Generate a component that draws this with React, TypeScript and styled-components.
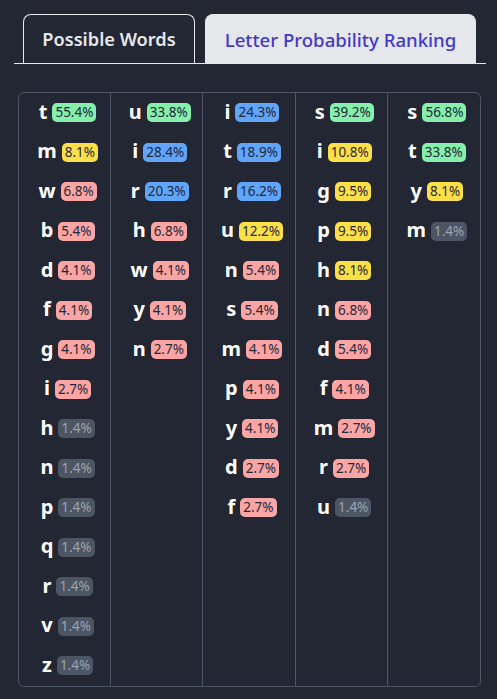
import styled, { createGlobalStyle } from "styled-components"

const Global = createGlobalStyle`
    body {
        margin: 0;
        background: #222733;
        font-family: "Noto Sans", "Open Sans", sans-serif;
    }
`

const Page = styled.div`
    padding: 14px 11px 0 14px;
`
const TabList = styled.div`
    display: flex;
    gap: 10px;
    padding-left: 9px;
    border-bottom: 1px solid #e5e7eb;
`
const Tab = styled.button<{ $active?: boolean }>`
    height: 49px;
    border: 1px solid #e5e7eb;
    border-bottom: none;
    border-radius: 8px 8px 0 0;
    background: ${p => (p.$active ? "#e5e7eb" : "transparent")};
    color: ${p => (p.$active ? "#4338ca" : "#e5e7eb")};
    font-family: inherit;
    font-size: ${p => (p.$active ? "18.6px" : "18.2px")};
    font-weight: ${p => (p.$active ? 500 : 600)};
    padding: 0;
    width: ${p => (p.$active ? "271px" : "172px")};
    cursor: pointer;
`
const Board = styled.div`
    margin: 28px 5px 0 4px;
    border: 1px solid #4b5563;
    border-radius: 6px;
    display: grid;
    grid-template-columns: repeat(5, 1fr);
    overflow: hidden;
`
const Column = styled.div`
    display: flex;
    flex-direction: column;
    border-right: 1px solid #4b5563;
    &:last-child {
        border-right: none;
    }
`
const Row = styled.div`
    height: 39.5px;
    display: flex;
    align-items: center;
    justify-content: center;
    gap: 5px;
    padding-left: 6px;
`
const Letter = styled.span`
    color: #ffffff;
    font-size: 20px;
    font-weight: 700;
    line-height: 1;
    padding-bottom: 2px;
`
const palette = {
    green: ["#86efac", "#1f2937"],
    blue: ["#60a5fa", "#1f2937"],
    yellow: ["#fde047", "#1f2937"],
    red: ["#fca5a5", "#1f2937"],
    gray: ["#4b5563", "#9ca3af"],
}
type Tone = keyof typeof palette

const Badge = styled.span<{ $tone: Tone }>`
    background: ${p => palette[p.$tone][0]};
    color: ${p => palette[p.$tone][1]};
    font-size: 13.5px;
    line-height: 19px;
    padding: 0 3px;
    border-radius: 5px;
`

const toneOf = (v: number): Tone => {
    if (v >= 30) return "green"
    if (v >= 15) return "blue"
    if (v >= 8) return "yellow"
    if (v >= 2) return "red"
    return "gray"
}

const columns: [string, number][][] = [
    [["t", 55.4], ["m", 8.1], ["w", 6.8], ["b", 5.4], ["d", 4.1], ["f", 4.1], ["g", 4.1], ["i", 2.7],
     ["h", 1.4], ["n", 1.4], ["p", 1.4], ["q", 1.4], ["r", 1.4], ["v", 1.4], ["z", 1.4]],
    [["u", 33.8], ["i", 28.4], ["r", 20.3], ["h", 6.8], ["w", 4.1], ["y", 4.1], ["n", 2.7]],
    [["i", 24.3], ["t", 18.9], ["r", 16.2], ["u", 12.2], ["n", 5.4], ["s", 5.4], ["m", 4.1], ["p", 4.1],
     ["y", 4.1], ["d", 2.7], ["f", 2.7]],
    [["s", 39.2], ["i", 10.8], ["g", 9.5], ["p", 9.5], ["h", 8.1], ["n", 6.8], ["d", 5.4], ["f", 4.1],
     ["m", 2.7], ["r", 2.7], ["u", 1.4]],
    [["s", 56.8], ["t", 33.8], ["y", 8.1], ["m", 1.4]],
]

const App = () => {
    return (
        <>
            <Global />
            <Page>
                <TabList>
                    <Tab>Possible Words</Tab>
                    <Tab $active>Letter Probability Ranking</Tab>
                </TabList>
                <Board>
                    {columns.map((col, i) => (
                        <Column key={i}>
                            {col.map(([letter, pct], j) => (
                                <Row key={j}>
                                    <Letter>{letter}</Letter>
                                    <Badge $tone={toneOf(pct)}>{pct.toFixed(1)}%</Badge>
                                </Row>
                            ))}
                        </Column>
                    ))}
                </Board>
            </Page>
        </>
    )
}

export default App
